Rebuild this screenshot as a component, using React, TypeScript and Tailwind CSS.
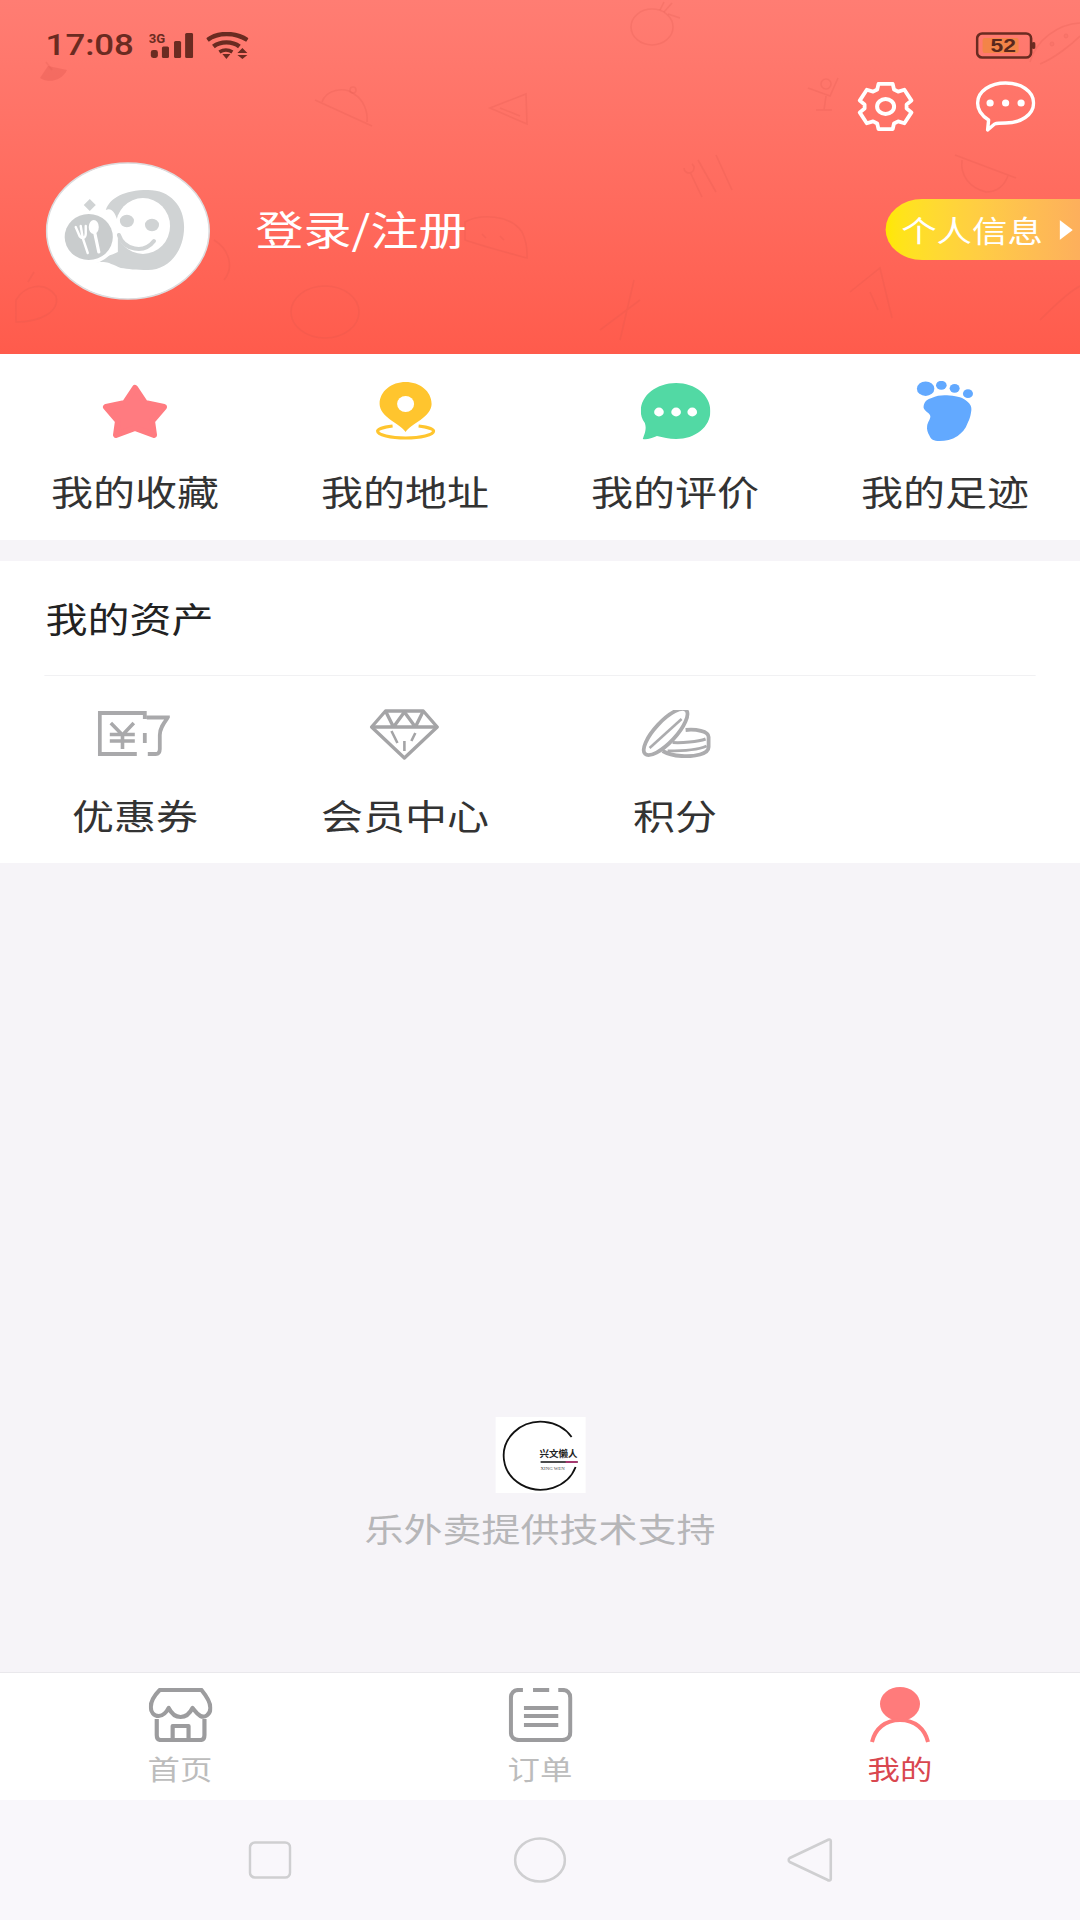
import React from "react";

const gearPath = (() => {
  const cx = 30, cy = 25.5, sx = 1.14, sy = 1;
  const pts: string[] = [];
  for (let i = 0; i < 6; i++) {
    const a = (i * Math.PI) / 3 - Math.PI / 2;
    const w = 0.27;
    const p = (ang: number, r: number) => `${(cx + Math.cos(ang) * r * sx).toFixed(1)} ${(cy + Math.sin(ang) * r * sy).toFixed(1)}`;
    pts.push(p(a - w - 0.14, 18.5), p(a - w, 23.5), p(a + w, 23.5), p(a + w + 0.14, 18.5));
  }
  return "M" + pts.join(" L") + " Z";
})();

function Doodles() {
  return (
    <svg className="absolute inset-0 w-[900px] h-[354px]" viewBox="0 0 1080 354" preserveAspectRatio="none" fill="none" stroke="#d9544b" strokeOpacity="0.2" strokeWidth="1.6">
      <ellipse cx="652" cy="27" rx="21" ry="18" />
      <path d="M664 12 L672 3 M668 14 L680 18 M660 10 L664 2" />
      <path d="M1030 62 C1036 40 1058 24 1080 23 M1040 64 C1055 58 1072 44 1080 36" />
      <circle cx="1052" cy="44" r="1.6" /><circle cx="1066" cy="36" r="1.6" />
      <path d="M808 88 L830 96 L838 78 M826 96 L824 110 M816 110 L832 110" />
      <circle cx="826" cy="84" r="5" />
      <path d="M315 100 L372 126 M322 102 C326 90 344 86 354 94 C364 100 368 112 367 122" />
      <circle cx="353" cy="90" r="3" />
      <path d="M490 108 L526 94 L527 124 Z M500 108 L520 116" />
      <path d="M690 172 L702 197 M698 160 L716 192 M716 155 L732 190 M684 168 a5 5 0 1 0 8 -4" />
      <path d="M955 155 L1016 178 M962 160 C960 176 970 188 986 192 C996 192 1004 186 1008 176" />
      <path d="M465 222 C480 214 510 214 522 232 C528 244 527 252 527 258 C505 252 482 246 465 240 Z M482 234 L486 238 M500 236 L504 240" />
      <path d="M214 240 C230 250 234 268 224 280" />
      <ellipse cx="325" cy="312" rx="34" ry="26" />
      <path d="M620 340 L634 280 M600 330 L640 300" />
      <path d="M850 292 L880 268 L892 318 M870 292 L878 310" />
      <path d="M16 300 C24 286 44 280 56 296 C60 312 40 322 16 322 Z M28 282 L34 272" />
      <path d="M1040 320 C1060 300 1072 290 1080 286" />
      <path d="M40 78 C50 84 62 80 67 70 L48 66 Z" fill="#d9544b" fillOpacity="0.3" stroke="none" />
      <path d="M46 62 L52 70" />
    </svg>
  );
}

function StatusBar() {
  return (
    <div className="relative flex items-center justify-between h-[27px] mt-[32px] pl-[38px] pr-[37px]">
      <div className="flex items-center">
        <span className="font-['Roboto',sans-serif] text-[29px] leading-none text-[#6a2b21] font-medium">17:08</span>
        <svg className="ml-[12px] w-[37px] h-[27px]" viewBox="0 0 44 27" preserveAspectRatio="none" fill="#6a2b21">
          <text x="0" y="10.5" fontSize="13" fontWeight="700" fontFamily="Roboto, sans-serif">3G</text>
          <rect x="2" y="18" width="7" height="8" rx="2.4" />
          <rect x="13" y="14.5" width="7" height="11.5" rx="1.5" />
          <rect x="25" y="9" width="7" height="17" rx="1.5" />
          <rect x="36" y="1" width="8" height="25" rx="1.5" />
        </svg>
        <svg className="ml-[11px] w-[35px] h-[27px]" viewBox="0 0 42 27" preserveAspectRatio="none" fill="none" stroke="#6a2b21" strokeWidth="4.4">
          <path d="M1 8 C11 0 29 0 41 8" />
          <path d="M7 14.5 C14 9 26 9 33 14.5" />
          <path d="M13 20 C17 17.5 22 17.5 26 20" strokeWidth="3.6" />
          <path d="M16 22 L24 22 L20 27 Z" fill="#6a2b21" stroke="none" />
          <path d="M36 16 L41 21 L31 21 Z M31 23 L41 23 L36 27 Z" fill="#6a2b21" stroke="none" />
        </svg>
      </div>
      <div className="relative w-[50px] h-[27px]">
        <svg className="absolute inset-0 w-[50px] h-[27px]" viewBox="0 0 60 27" preserveAspectRatio="none">
          <rect x="7" y="6" width="36" height="15" rx="2" fill="#f38448" />
          <rect x="1.5" y="1.5" width="54" height="24" rx="5" fill="none" stroke="#6a2b21" strokeWidth="2.6" />
          <rect x="56" y="10" width="4" height="7" rx="2" fill="#6a2b21" />
        </svg>
        <span className="absolute inset-0 flex items-center justify-center pr-[4px] font-['Liberation_Sans',sans-serif] font-bold text-[19px] leading-none text-[#59281c]">52</span>
      </div>
    </div>
  );
}

function Avatar() {
  return (
    <svg className="w-[138px] h-[138px]" viewBox="0 0 165 138" preserveAspectRatio="none">
      <ellipse cx="82" cy="69" rx="81" ry="68" fill="#ffffff" stroke="#dcdcde" strokeWidth="1.6" />
      <path d="M60 48 C64 36 78 28 102 28 C124 28 138 44 138 65 C138 90 122 108 102 108 C90 108 82 107 75 106 C68 103 62 100 58 100 C50 100 42 101 37 100 C50 97 62 95 72 90 L72 60 C70 52 66 45 60 48 Z" fill="#d0d3d4" />
      <ellipse cx="97" cy="64" rx="27" ry="28" fill="#ffffff" />
      <ellipse cx="81" cy="59" rx="7" ry="6.2" fill="#d0d3d4" />
      <ellipse cx="106" cy="63" rx="7" ry="6.2" fill="#d0d3d4" />
      <path d="M73 73 C78 88 98 92 108 79" fill="none" stroke="#d0d3d4" strokeWidth="4" strokeLinecap="round" />
      <ellipse cx="43" cy="75" rx="28" ry="27" fill="#ffffff" />
      <ellipse cx="43" cy="75" rx="24" ry="23" fill="#c9cccd" />
      <path d="M44 37 L50 43 L44 49 L38 43 Z" fill="#d0d3d4" />
      <path d="M30 65 L33 72 C34 75 36 76 37 76 L42 91 M35 64 L37 76 M40 64 L40 72 C40 75 38 76 37 76" fill="none" stroke="#ffffff" strokeWidth="2.4" strokeLinecap="round" />
      <ellipse cx="48" cy="65" rx="5" ry="7" fill="#ffffff" />
      <path d="M49 71 L53 90" stroke="#ffffff" strokeWidth="3.2" strokeLinecap="round" />
    </svg>
  );
}

function Header() {
  return (
    <header className="relative h-[354px] shrink-0 bg-gradient-to-b from-[#ff7d73] to-[#ff5b4c] overflow-hidden">
      <Doodles />
      <StatusBar />
      <div className="relative flex justify-end items-center mt-[22px] pr-[37px] gap-[50px] h-[51px]">
        <svg className="w-[50px] h-[51px]" viewBox="0 0 60 51" preserveAspectRatio="none" fill="none" stroke="#ffffff" strokeWidth="3.8" strokeLinejoin="round">
          <path d={gearPath} />
          <ellipse cx="30" cy="25.5" rx="8.5" ry="7.5" strokeWidth="4" />
        </svg>
        <svg className="w-[50px] h-[51px]" viewBox="0 0 60 51" preserveAspectRatio="none" fill="none" stroke="#ffffff" strokeWidth="3.4" strokeLinejoin="round">
          <path d="M13 39 C5 34 2 28 2 22 C2 10 15 2 30 2 C45 2 58 10 58 22 C58 34 45 42 30 42 C26 42 22 42 19 43 L12 49 Z" />
          <circle cx="14.5" cy="22" r="3.6" fill="#ffffff" stroke="none" />
          <circle cx="30" cy="22" r="3.6" fill="#ffffff" stroke="none" />
          <circle cx="45.5" cy="22" r="3.6" fill="#ffffff" stroke="none" />
        </svg>
      </div>
      <div className="relative flex items-center justify-between mt-[30px] pl-[38px] h-[138px]">
        <div className="flex items-center">
          <Avatar />
          <span className="ml-[37px] mb-[7px] text-[40px] leading-none text-white whitespace-nowrap">登录/注册</span>
        </div>
        <div className="flex items-center w-[162px] h-[61px] mb-[3px] pl-[13px] rounded-l-full bg-gradient-to-r from-[#ffe800] to-[#fdaf5c] text-white">
          <span className="text-[29.5px] leading-none whitespace-nowrap">个人信息</span>
          <svg className="ml-[14px] w-[11px] h-[20px]" viewBox="0 0 11 20" fill="#ffffff"><path d="M0 0 L11 10 L0 20 Z" /></svg>
        </div>
      </div>
    </header>
  );
}

const Star = () => (
  <svg className="w-[55px] h-[55px]" viewBox="0 0 66 55" preserveAspectRatio="none" fill="#ff7b80" stroke="#ff7b80" strokeWidth="6" strokeLinejoin="round">
    <polygon points="33,4 43,19 62,23 50,37 52,51 33,44 14,51 16,37 4,23 23,19" />
  </svg>
);
const Pin = () => (
  <svg className="w-[50px] h-[60px]" viewBox="0 0 60 60" preserveAspectRatio="none" fill="none">
    <path d="M17 45 C8 46 2 48 2 50 C2 54 15 57 30 57 C45 57 58 54 58 50 C58 48 52 46 43 45" stroke="#ffc52e" strokeWidth="3.2" />
    <path d="M30 51 C25 43 4 36 4 23 C4 10 16 1 30 1 C44 1 56 10 56 23 C56 36 35 43 30 51 Z" fill="#ffc52e" />
    <ellipse cx="30" cy="23" rx="8.5" ry="8" fill="#ffffff" />
  </svg>
);
const Bubble = () => (
  <svg className="w-[58px] h-[57px]" viewBox="0 0 69 57" preserveAspectRatio="none" fill="#52d9a4">
    <path d="M35 0 C54 0 69 12 69 28 C69 44 54 56 35 56 C28 56 22 54 16 53 C11 55 6 57 2 56 C4 50 6 46 4 40 C1 36 0 32 0 28 C0 12 16 0 35 0 Z" />
    <ellipse cx="18" cy="29" rx="4.8" ry="4.4" fill="#ffffff" />
    <ellipse cx="35" cy="29" rx="4.8" ry="4.4" fill="#ffffff" />
    <ellipse cx="51" cy="29" rx="4.8" ry="4.4" fill="#ffffff" />
  </svg>
);
const Foot = () => (
  <svg className="w-[48.4px] h-[61px]" viewBox="0 0 58 61" preserveAspectRatio="none" fill="#62a9ff">
    <ellipse cx="10" cy="7.7" rx="8.7" ry="7.3" />
    <ellipse cx="25.7" cy="4.3" rx="5.3" ry="4.5" />
    <ellipse cx="39" cy="7.3" rx="5" ry="4.4" />
    <ellipse cx="52.3" cy="12.7" rx="5" ry="4.4" />
    <path d="M8 25 C9 20 12 18 16 17 C22 14 28 14 34 14.5 C42 15 48 17 51 20 C55 23 56 26 55.7 29 C55 35 54 38 52 42 C50 48 46 52 42 55 C36 59 30 60 24 60 C18 60 15 58 14 55 C12 52 11 48 11.5 45 C12 41 15 38 14.7 35 C14 31 7 30 8 25 Z" />
  </svg>
);
const Ticket = () => (
  <svg className="w-[60px] h-[46px] -translate-x-[1.5px]" viewBox="0 0 72 46" preserveAspectRatio="none" fill="none" stroke="#a9a9ab" strokeWidth="3.8">
    <path d="M47 8 V2 H2 V43 H39 M47 22 V32 M49 6.5 H70 C66 12 62 17 62 24 V38 C62 42 60 43 58 43 H50" />
    <path d="M13 12 L24.7 24 L36 12 M12 23.5 H37 M12 30 H37 M24.7 24 V38" strokeWidth="3.6" />
  </svg>
);
const Diamond = () => (
  <svg className="w-[58px] h-[51px] -translate-x-[1px]" viewBox="0 0 70 51" preserveAspectRatio="none" fill="none" stroke="#a4a4a6" strokeWidth="3.4" strokeLinejoin="round">
    <path d="M16 2 H54 L68 18 L35 49 L2 18 Z" />
    <path d="M2 18 H68 M16 2 L24 18 L35 3 L46 18 L54 2" />
    <path d="M22 22 L28 34 M46 24 L42 32 M35 32 L35 42" strokeWidth="2.6" />
  </svg>
);
const Coins = () => (
  <svg className="w-[60px] h-[48px]" viewBox="0 0 72 48" preserveAspectRatio="none" fill="none" stroke="#acacae" strokeWidth="3.8">
    <ellipse cx="26" cy="22" rx="30" ry="10.5" transform="rotate(-47 26 22)" />
    <path d="M10 38 L42 9" strokeWidth="2.6" />
    <path d="M46 20 C56 19 69 21 69 27 V37 C69 44 55 47 42 46 C34 45.5 28 44 23 41" />
    <path d="M33 32.5 C42 33 58 32 66 29 M28 41 C42 41 58 40 67 36" strokeWidth="3" />
  </svg>
);

function Cell({ icon, label, iconH, gap }: { icon: React.ReactNode; label: string; iconH: string; gap: string }) {
  return (
    <div className="flex flex-col items-center">
      <div className={`flex items-center justify-center ${iconH}`}>{icon}</div>
      <span className={`${gap} text-[35px] leading-[40px] text-[#333333] whitespace-nowrap`}>{label}</span>
    </div>
  );
}

const Home = () => (
  <svg className="w-[53px] h-[54px]" viewBox="0 0 64 54" preserveAspectRatio="none" fill="none" stroke="#9c9c9e" strokeWidth="4.2" strokeLinejoin="round">
    <path d="M11 2 H53 C58 8 62 14 62 20 C62 27 56 30 52 28 C48 26 46 22 44 20 C42 24 38 29 32 29 C26 29 22 24 20 20 C18 24 14 28 10 28 C5 28 2 24 2 19 C2 13 6 7 11 2 Z" />
    <path d="M8 31 V47 C8 50 9 52 12 52 H52 C55 52 56 50 56 47 V31" />
    <path d="M24 52 V38 H40 V52" />
  </svg>
);
const Orders = () => (
  <svg className="w-[53px] h-[54px]" viewBox="0 0 63 54" preserveAspectRatio="none" fill="none" stroke="#9c9c9e" strokeWidth="4.2">
    <path d="M14 2 H10 C5 2 2 5 2 10 V44 C2 49 5 52 10 52 H53 C58 52 61 49 61 44 V10 C61 5 58 2 53 2 H49" />
    <path d="M24 2 H40" />
    <path d="M15 20 H49 M15 28 H49 M15 37 H49" strokeWidth="3.8" />
  </svg>
);
const Person = () => (
  <svg className="w-[50px] h-[56px]" viewBox="0 0 60 56" preserveAspectRatio="none" fill="none">
    <ellipse cx="30" cy="17" rx="20" ry="17" fill="#ff7b7b" />
    <path d="M2 55 C5 42 15 33 30 33 C45 33 55 42 58 55" stroke="#ff7b7b" strokeWidth="4" />
  </svg>
);

function Tab({ icon, label, active }: { icon: React.ReactNode; label: string; active?: boolean }) {
  return (
    <div className="flex flex-col items-center pt-[15px]">
      <div className="flex items-center justify-center h-[54px]">{icon}</div>
      <span className={`mt-[12px] text-[27px] leading-[30px] ${active ? "text-[#d9474f]" : "text-[#bcbcbc]"}`}>{label}</span>
    </div>
  );
}

export default function App() {
  return (
    <div className="w-[900px] h-[1920px] origin-top-left scale-x-[1.2] flex flex-col bg-[#f6f4f8] font-['Noto_Sans_CJK_SC','Noto_Sans',sans-serif] overflow-hidden">
      <Header />
      <section className="h-[186px] shrink-0 bg-white grid grid-cols-4 pt-[26px]">
        <Cell icon={<Star />} label="我的收藏" iconH="h-[62px]" gap="mt-[29px]" />
        <Cell icon={<Pin />} label="我的地址" iconH="h-[62px]" gap="mt-[29px]" />
        <Cell icon={<Bubble />} label="我的评价" iconH="h-[62px]" gap="mt-[29px]" />
        <Cell icon={<Foot />} label="我的足迹" iconH="h-[62px]" gap="mt-[29px]" />
      </section>
      <section className="mt-[21px] h-[302px] shrink-0 bg-white">
        <div className="h-[114px] flex items-center pl-[38px] text-[35px] leading-[40px] text-[#222222]">我的资产</div>
        <div className="h-px mx-[37px] bg-[#f1f1f3]" />
        <div className="grid grid-cols-4 pt-[32px]">
          <Cell icon={<Ticket />} label="优惠券" iconH="h-[52px]" gap="mt-[35px]" />
          <Cell icon={<Diamond />} label="会员中心" iconH="h-[52px]" gap="mt-[35px]" />
          <Cell icon={<Coins />} label="积分" iconH="h-[52px]" gap="mt-[35px]" />
        </div>
      </section>
      <main className="flex-1 flex flex-col items-center pt-[554px]">
        <div className="w-[75px] h-[76px] bg-white">
          <svg className="w-[75px] h-[76px]" viewBox="0 0 90 76" preserveAspectRatio="none" fill="none">
            <path d="M76 20 A37 34 0 1 0 80 50" stroke="#111111" strokeWidth="1.8" />
            <text x="44" y="40" fontSize="9.5" fill="#222222" fontFamily="'Noto Sans CJK SC',serif" fontWeight="700">兴文懒人</text>
            <path d="M45 45 H82" stroke="#111111" strokeWidth="1.6" />
            <path d="M70 45 H82" stroke="#a5386e" strokeWidth="2.2" />
            <text x="45" y="53" fontSize="4.8" fill="#444444" fontFamily="'Liberation Serif',serif">XING WEN</text>
          </svg>
        </div>
        <span className="mt-[15px] text-[32.5px] leading-[40px] text-[#b6b6b8] whitespace-nowrap">乐外卖提供技术支持</span>
      </main>
      <nav className="h-[128px] shrink-0 bg-white border-t border-[#e9e8ec] grid grid-cols-3">
        <Tab icon={<Home />} label="首页" />
        <Tab icon={<Orders />} label="订单" />
        <Tab icon={<Person />} label="我的" active />
      </nav>
      <footer className="h-[120px] shrink-0 bg-[#f9f7fb] grid grid-cols-3 items-center justify-items-center px-[112.5px] pb-[1px]">
        <svg className="w-[36px] h-[38px]" viewBox="0 0 43 38" preserveAspectRatio="none" fill="none" stroke="#cfcfd1" strokeWidth="2.6">
          <rect x="1.5" y="1.5" width="40" height="35" rx="5" />
        </svg>
        <svg className="w-[44px] h-[46px]" viewBox="0 0 53 46" preserveAspectRatio="none" fill="none" stroke="#cfcfd1" strokeWidth="2.6">
          <ellipse cx="26.5" cy="23" rx="25" ry="21.5" />
        </svg>
        <svg className="w-[38px] h-[44px]" viewBox="0 0 45 44" preserveAspectRatio="none" fill="none" stroke="#cfcfd1" strokeWidth="2.6" strokeLinejoin="round">
          <path d="M43 3 C43 1.5 41 1 40 2 L2.5 20 C1 21 1 23 2.5 24 L40 42 C41 43 43 42.5 43 41 Z" />
        </svg>
      </footer>
    </div>
  );
}
